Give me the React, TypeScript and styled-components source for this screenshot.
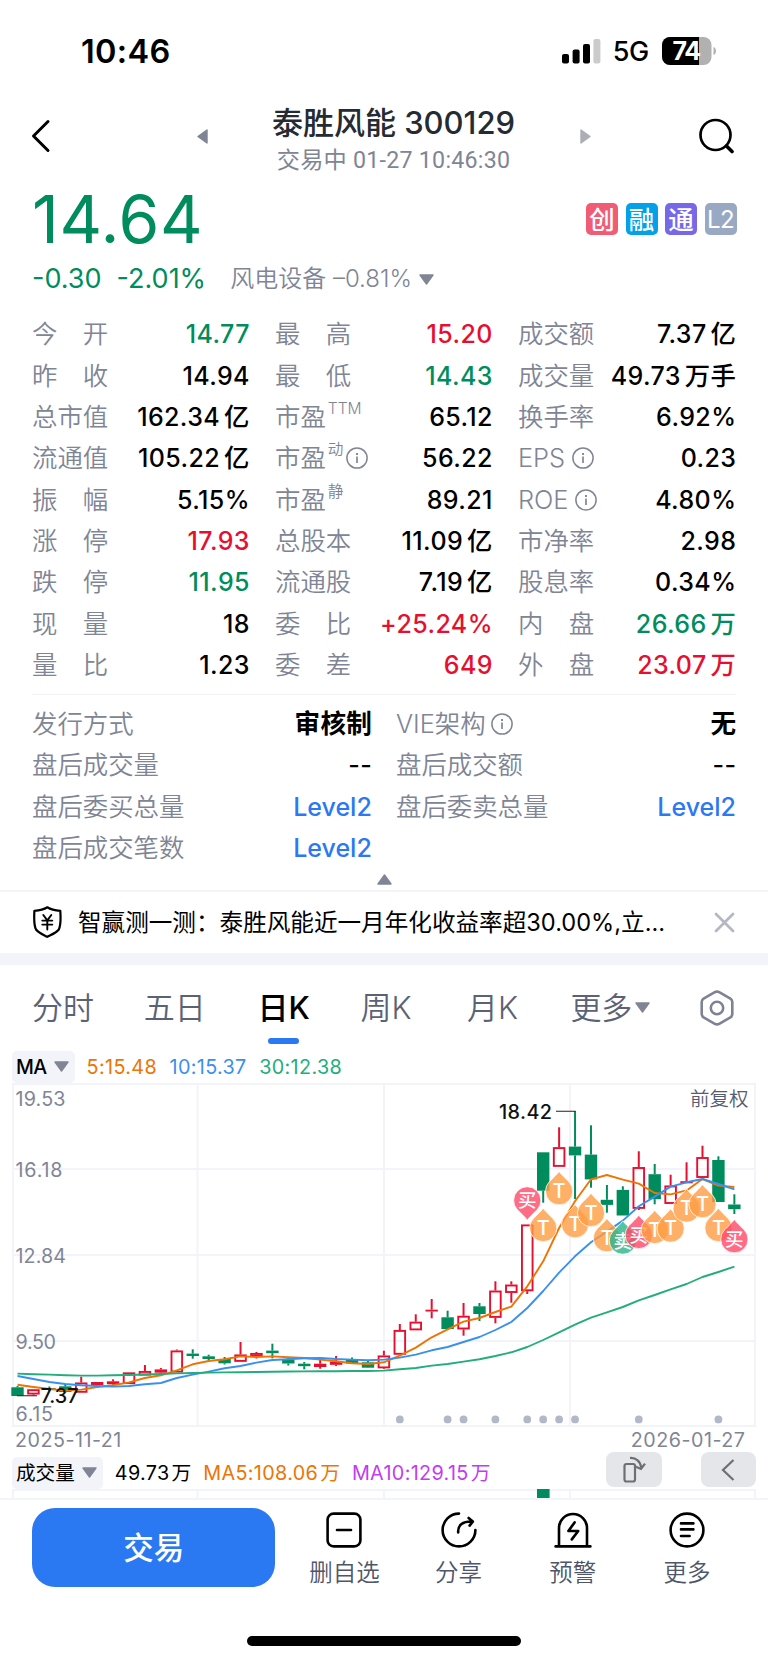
import React from 'react';
import styled, { createGlobalStyle } from 'styled-components';

const C = {
  text: '#000000',
  title: '#252b33',
  label: '#808596',
  tab: '#5b6276',
  red: '#e60f2f',
  green: '#008c5c',
  blue: '#2b78f3',
  grid: '#f3f4fa',
  ma5: '#ee7404',
  ma10: '#3a90ee',
  ma30: '#22ad7b',
  violet: '#c23cf2',
};

const GlobalStyle = createGlobalStyle`
  body { margin: 0; background: #fff; }
  * { box-sizing: border-box; }
`;

const Page = styled.div`
  width: 768px;
  height: 1663px;
  overflow: hidden;
  display: flex;
  flex-direction: column;
  background: #fff;
  color: ${C.text};
  font-family: Inter, 'Noto Sans CJK SC', sans-serif;
  white-space: nowrap;
`;

/* ---------- status bar ---------- */
const StatusBar = styled.div`
  height: 102px;
  padding: 0 51px 0 81px;
  display: flex;
  align-items: center;
  justify-content: space-between;
`;
const Clock = styled.span`
  font-size: 32.5px;
  font-weight: 600;
  letter-spacing: 0.3px;
`;
const StatusRight = styled.div`
  display: flex;
  align-items: center;
`;
const Network = styled.span`
  margin: 1px 13.5px 0 11.5px;
  font-size: 27px;
  font-weight: 500;
  letter-spacing: -0.6px;
`;

/* ---------- header ---------- */
const Header = styled.header`
  height: 78px;
  padding: 0 33px 0 31px;
  display: grid;
  grid-template-columns: 166px 76px 241px 77px 1fr;
`;
const HeaderIcon = styled.div`
  height: 68px;
  display: flex;
  align-items: center;
  justify-content: ${(p: { $end?: boolean }) => (p.$end ? 'flex-end' : 'flex-start')};
`;
const TitleBlock = styled.div`
  display: flex;
  flex-direction: column;
  align-items: center;
`;
const Title = styled.div`
  line-height: 41px;
  font-size: 31px;
  font-weight: 500;
  color: ${C.title};
`;
const Subtitle = styled.div`
  line-height: 34px;
  font-family: Roboto, 'Noto Sans CJK SC', sans-serif;
  font-size: 23.2px;
  color: ${C.label};
  letter-spacing: 0.25px;
`;

/* ---------- quote ---------- */
const PriceRow = styled.div`
  height: 78px;
  padding: 0 31.5px 0 32px;
  display: flex;
  align-items: center;
  justify-content: space-between;
`;
const Price = styled.div`
  font-size: 66px;
  line-height: 78px;
  font-weight: 400;
  letter-spacing: 0.6px;
  color: ${C.green};
`;
const Badges = styled.div`
  display: flex;
  gap: 7.5px;
`;
const Badge = styled.span`
  width: 32px;
  height: 32px;
  border-radius: 5px;
  display: flex;
  align-items: center;
  justify-content: center;
  padding-bottom: ${(p: { $bg: string; $latin?: boolean }) => (p.$latin ? 0 : 4)}px;
  background: ${p => p.$bg};
  color: #fff;
  font-size: ${p => (p.$latin ? 24 : 25.5)}px;
  font-weight: ${p => (p.$latin ? 400 : 500)};
  letter-spacing: ${p => (p.$latin ? -0.5 : 0)}px;
`;
const ChangeRow = styled.div`
  height: 42px;
  padding-left: 32px;
  display: flex;
  align-items: center;
`;
const Change = styled.span`
  margin-right: ${(p: { $gap: number }) => p.$gap}px;
  font-size: 27px;
  line-height: 42px;
  color: ${C.green};
`;
const Sector = styled.span`
  margin-right: 7px;
  font-size: 24px;
  line-height: 42px;
  font-weight: 350;
  color: ${C.label};
`;

/* ---------- figures ---------- */
const Figures = styled.div`
  padding: 13.6px 32px 0 32px;
  display: grid;
  grid-template-columns: 217.5px 217.5px 218px;
  column-gap: 25.5px;
  grid-auto-rows: 41.35px;
`;
const ExtraFigures = styled(Figures)`
  padding-top: 8px;
  grid-template-columns: 339.8px 340px;
  column-gap: 24.2px;
`;
const Figure = styled.div`
  display: flex;
  align-items: center;
  justify-content: space-between;
`;
const Label = styled.span`
  display: flex;
  align-items: center;
  font-size: 25.4px;
  line-height: 30px;
  font-weight: 350;
  color: ${C.label};
`;
const Sup = styled.span`
  margin: -16px 0 0 2px;
  font-size: 15.6px;
`;
const Value = styled.span`
  display: flex;
  align-items: center;
  gap: 4px;
  font-size: ${(p: { $color?: string; $strong?: boolean }) => (p.$strong ? 25.6 : 25)}px;
  line-height: 30px;
  font-weight: ${p => (p.$strong ? 600 : 500)};
  letter-spacing: ${p => (p.$strong ? 0.3 : 0.4)}px;
  margin-right: -0.4px;
  color: ${p => p.$color || C.text};
`;
const Link = styled(Value)`
  letter-spacing: 0;
  margin-right: 0;
`;
const Unit = styled.span`
  font-size: 25.4px;
`;
const Divider = styled.div`
  flex: none;
  height: 1px;
  margin: 8.5px 32px 0;
  background: #f1f2f6;
`;
const Collapse = styled.div`
  height: 21px;
  display: flex;
  justify-content: center;
  padding: 5px 0 0 0;
`;

/* ---------- notice ---------- */
const Notice = styled.div`
  height: 63px;
  border-top: 2px solid ${C.grid};
  padding: 0 33px;
  display: flex;
  align-items: center;
`;
const NoticeText = styled.span`
  flex: 1;
  margin: -3px 0 0 16px;
  font-size: 23.6px;
`;
const Band = styled.div`
  height: 12px;
  background: #f3f4f9;
`;

/* ---------- tabs ---------- */
const Tabs = styled.nav`
  height: 85px;
  padding-left: 32px;
  display: grid;
  justify-items: start;
  grid-template-columns: 111.8px 113.8px 102.9px 106.5px 103.4px 130px 34px;
`;
const Tab = styled.div`
  height: 85px;
  display: flex;
  flex-direction: column;
  align-items: center;
  font-size: 31px;
  line-height: 60px;
  font-weight: ${(p: { $active?: boolean }) => (p.$active ? 500 : 350)};
  color: ${p => (p.$active ? '#000' : C.tab)};
`;
const TabText = styled.span`
  height: 73px;
  display: flex;
  align-items: center;
  gap: 3px;
  padding-top: 13px;
`;
const Underline = styled.span`
  width: 31px;
  height: 6px;
  margin-top: 0.5px;
  border-radius: 3px;
  background: ${C.blue};
`;

/* ---------- chart ---------- */
const IndicatorRow = styled.div`
  height: ${(p: { $h: number }) => p.$h}px;
  padding: 0 12px;
  display: flex;
  align-items: flex-end;
  font-size: 19.6px;
  line-height: 32px;
`;
const Selector = styled.div`
  height: 32px;
  padding: 0 6px 0 4px;
  display: flex;
  align-items: center;
  gap: 7px;
  border-radius: 5px;
  background: ${C.grid};
  font-weight: ${(p: { $latin?: boolean }) => (p.$latin ? 500 : 400)};
  letter-spacing: ${p => (p.$latin ? -0.6 : 0)}px;
`;
const Reading = styled.span`
  height: 32px;
  margin-left: ${(p: { $ml: number; $color: string }) => p.$ml}px;
  display: flex;
  gap: 2px;
  font-size: 19.8px;
  letter-spacing: 0.35px;
  color: ${p => p.$color};
`;
const Dates = styled.div`
  height: 24px;
  padding: 0 22.5px 0 15px;
  display: flex;
  align-items: center;
  justify-content: space-between;
  font-size: 19.7px;
  letter-spacing: 0.5px;
  color: ${C.label};
`;
const ChartButtons = styled.div`
  align-self: flex-start;
  margin: 0.5px 0 0 auto;
  display: flex;
  gap: 39px;
`;
const ChartButton = styled.div`
  width: 55.5px;
  height: 35px;
  border-radius: 8px;
  background: #e5e6ea;
  display: flex;
  align-items: center;
  justify-content: center;
`;
const Plot = styled.svg`
  display: block;
  flex: none;
  font-family: Inter, 'Noto Sans CJK SC', sans-serif;
`;

/* ---------- bottom bar ---------- */
const BottomBar = styled.div`
  flex: 1;
  border-top: 2px solid ${C.grid};
  padding: 8px 24px 0 32px;
  display: flex;
  flex-direction: column;
`;
const Actions = styled.div`
  display: flex;
`;
const TradeButton = styled.div`
  width: 243.5px;
  height: 79px;
  margin-right: 12px;
  border-radius: 23px;
  background: ${C.blue};
  color: #fff;
  display: flex;
  align-items: center;
  justify-content: center;
  padding-bottom: 2px;
  font-size: 30.5px;
  font-weight: 500;
`;
const Action = styled.div`
  width: 114.2px;
  height: 84px;
  padding-top: 4px;
  display: flex;
  flex-direction: column;
  align-items: center;
  gap: 8px;
  font-size: 23.5px;
  line-height: 34px;
  font-weight: 350;
  color: #4f566b;
`;
const HomeIndicator = styled.div`
  width: 274px;
  height: 10px;
  margin: 44px 0 0 215px;
  border-radius: 5px;
  background: #000;
`;

/* ---------- small drawings ---------- */
const Triangle = ({ dir, w, h, color = '#808596' }: { dir: 'up' | 'down' | 'left' | 'right'; w: number; h: number; color?: string }) => {
  const d = {
    up: `M${w / 2} 1L${w - 1} ${h - 1}H1Z`,
    down: `M1 1H${w - 1}L${w / 2} ${h - 1}Z`,
    left: `M${w - 1} 1V${h - 1}L1 ${h / 2}Z`,
    right: `M1 1V${h - 1}L${w - 1} ${h / 2}Z`,
  }[dir];
  return (
    <svg width={w} height={h}>
      <path d={d} fill={color} stroke={color} strokeWidth="1.4" strokeLinejoin="round" />
    </svg>
  );
};

const InfoIcon = styled(({ className }: { className?: string; $ml: number }) => (
  <svg className={className} width="22" height="22" viewBox="0 0 22 22" fill="none" stroke={C.label} strokeWidth="1.5">
    <circle cx="11" cy="11" r="10.1" />
    <path d="M11 9.6V16" strokeWidth="1.7" />
    <path d="M11 6V8" strokeWidth="1.9" />
  </svg>
))`
  margin-left: ${p => p.$ml}px;
`;

/* ---------- data ---------- */
type Fig = { l: string; sup?: string; info?: number; v: string; u?: string; c?: string; strong?: boolean; link?: boolean };
const figures: Fig[] = [
  { l: '今　开', v: '14.77', c: C.green }, { l: '最　高', v: '15.20', c: C.red }, { l: '成交额', v: '7.37', u: '亿' },
  { l: '昨　收', v: '14.94' }, { l: '最　低', v: '14.43', c: C.green }, { l: '成交量', v: '49.73', u: '万手' },
  { l: '总市值', v: '162.34', u: '亿' }, { l: '市盈', sup: 'TTM', v: '65.12' }, { l: '换手率', v: '6.92%' },
  { l: '流通值', v: '105.22', u: '亿' }, { l: '市盈', sup: '动', info: 3, v: '56.22' }, { l: 'EPS', info: 6.5, v: '0.23' },
  { l: '振　幅', v: '5.15%' }, { l: '市盈', sup: '静', v: '89.21' }, { l: 'ROE', info: 6.5, v: '4.80%' },
  { l: '涨　停', v: '17.93', c: C.red }, { l: '总股本', v: '11.09', u: '亿' }, { l: '市净率', v: '2.98' },
  { l: '跌　停', v: '11.95', c: C.green }, { l: '流通股', v: '7.19', u: '亿' }, { l: '股息率', v: '0.34%' },
  { l: '现　量', v: '18' }, { l: '委　比', v: '+25.24%', c: C.red }, { l: '内　盘', v: '26.66', u: '万', c: C.green },
  { l: '量　比', v: '1.23' }, { l: '委　差', v: '649', c: C.red }, { l: '外　盘', v: '23.07', u: '万', c: C.red },
];
const extras: Fig[] = [
  { l: '发行方式', v: '审核制', strong: true }, { l: 'VIE架构', info: 5.5, v: '无', strong: true },
  { l: '盘后成交量', v: '--' }, { l: '盘后成交额', v: '--' },
  { l: '盘后委买总量', v: 'Level2', link: true }, { l: '盘后委卖总量', v: 'Level2', link: true },
  { l: '盘后成交笔数', v: 'Level2', link: true },
];

const FigureCell = ({ f }: { f: Fig }) => (
  <Figure>
    <Label>
      {f.l}
      {f.sup && <Sup>{f.sup}</Sup>}
      {f.info !== undefined && <InfoIcon $ml={f.info} />}
    </Label>
    {f.link ? (
      <Link $color={C.blue}>{f.v}</Link>
    ) : (
      <Value $color={f.c} $strong={f.strong}>
        {f.v}
        {f.u && <Unit>{f.u}</Unit>}
      </Value>
    )}
  </Figure>
);

/* Candle: [kind, high, bodyTop, bodyBottom, low] — r rising, f falling */
type Candle = ['r' | 'f', number, number, number, number];
const candles: Candle[] = [
  ['f', 1386, 1387.3, 1396, 1396], ['r', 1389, 1389.3, 1394.5, 1395.5], ['f', 1386.5, 1388, 1390, 1391], ['f', 1384, 1386.3, 1392, 1393],
  ['r', 1376.7, 1382.5, 1392.7, 1392.7], ['r', 1382, 1382, 1385, 1385], ['r', 1379.3, 1381.3, 1384.2, 1385], ['r', 1372.4, 1372.4, 1384, 1384],
  ['r', 1365, 1371, 1375.5, 1375.5], ['r', 1368, 1369.4, 1372.7, 1374], ['r', 1349.5, 1350.5, 1372.5, 1372.5], ['f', 1349.3, 1353.6, 1356, 1358.7],
  ['f', 1354.7, 1356.3, 1359, 1361], ['f', 1357, 1359, 1363.3, 1364.5], ['r', 1342, 1354.5, 1361.8, 1361.8], ['r', 1352, 1353, 1356.8, 1358.5],
  ['f', 1343.7, 1350.6, 1353.2, 1358.3], ['f', 1358, 1360, 1363.5, 1365.5], ['f', 1362, 1363.7, 1366.2, 1369.3], ['r', 1360, 1363.7, 1367, 1368.7],
  ['r', 1356, 1361.5, 1364.8, 1366], ['f', 1357.5, 1360, 1363.5, 1364], ['f', 1361, 1362.3, 1367.7, 1368], ['r', 1350.7, 1355.5, 1368.3, 1369],
  ['r', 1324, 1330, 1354.7, 1354.7], ['r', 1314.3, 1321.7, 1330.3, 1330.3], ['r', 1299, 1309.7, 1311.5, 1318.3], ['f', 1310.7, 1317.3, 1329, 1329],
  ['r', 1303, 1315.8, 1329.4, 1335.7], ['f', 1303, 1306.3, 1314, 1321], ['r', 1281.3, 1290.6, 1317.8, 1323.3], ['r', 1281.3, 1284.6, 1292.9, 1302.7],
  ['r', 1224.5, 1224.5, 1291.2, 1294], ['f', 1152.3, 1152.3, 1190.7, 1202.7], ['r', 1127.3, 1147.2, 1166.8, 1166.8], ['f', 1111, 1146.6, 1155.4, 1199],
  ['f', 1125.3, 1154.6, 1179.4, 1187.7], ['f', 1185, 1199.8, 1204.9, 1212.7], ['f', 1186.3, 1189.9, 1215.5, 1215.5], ['r', 1151.3, 1167.1, 1208.8, 1210],
  ['f', 1164, 1174.2, 1199.2, 1204.3], ['r', 1174.7, 1185.5, 1203.9, 1203.9], ['r', 1162.3, 1181.2, 1183.3, 1183.3], ['r', 1145.7, 1157.1, 1177.9, 1177.9],
  ['f', 1156.3, 1160, 1202, 1202], ['f', 1194.3, 1204.5, 1209.2, 1214],
];
const ma5 = [1384.8, 1387, 1389, 1390.6, 1389.6, 1387, 1385.3, 1382.4, 1378, 1375.3, 1370.3, 1364.3, 1361, 1359.3, 1356.4, 1357, 1356.4, 1357.3, 1358, 1359.6, 1361.3, 1363.3, 1364, 1362.3, 1355.6, 1347.6, 1337.3, 1329.3, 1321.6, 1318, 1312, 1306.6, 1286.3, 1261.3, 1228, 1201.3, 1179.3, 1175, 1179.6, 1183.6, 1193, 1194.4, 1190.4, 1179, 1185.6, 1187];
const ma10 = [1376, 1379, 1382, 1384, 1385.3, 1386, 1386.6, 1386, 1384.3, 1383, 1378, 1374.6, 1371.6, 1368.3, 1366, 1362.6, 1360, 1359.3, 1358.3, 1358, 1359, 1359.6, 1360.3, 1359.6, 1357.6, 1354.6, 1350.3, 1347, 1342, 1337, 1330, 1322, 1308, 1291, 1272.6, 1256.3, 1242.3, 1231.6, 1220.6, 1206.3, 1196.6, 1186.6, 1182.3, 1179, 1184, 1189.4];
const ma30 = [1373.6, 1374.2, 1374.6, 1375.2, 1375.6, 1375.6, 1375.3, 1375, 1374.5, 1374, 1373.4, 1373, 1372.6, 1372.4, 1372.2, 1372, 1371.7, 1371.5, 1371.4, 1371.3, 1371.2, 1371, 1371, 1370.6, 1369.3, 1368, 1365.6, 1364, 1361.6, 1359.3, 1356, 1352.3, 1347, 1340, 1332.3, 1324.6, 1317.6, 1312.3, 1307, 1300.3, 1295, 1289.3, 1284, 1277, 1272, 1266.6];
const dots = [24, 27, 28, 30, 32, 33, 34, 35, 39, 44];

type Pin = { i: number; y: number; k: 'T' | '买' | '卖'; down?: boolean };
const pins: Pin[] = [
  { i: 32, y: 1200.2, k: '买', down: true }, { i: 33, y: 1228.2, k: 'T' }, { i: 34, y: 1191.4, k: 'T' }, { i: 35, y: 1224.4, k: 'T' },
  { i: 36, y: 1213.2, k: 'T' }, { i: 37, y: 1238.4, k: 'T' }, { i: 38, y: 1240.8, k: '卖' }, { i: 39, y: 1235.2, k: '买' },
  { i: 40, y: 1230.2, k: 'T' }, { i: 41, y: 1228.8, k: 'T' }, { i: 42, y: 1208.8, k: 'T' }, { i: 43, y: 1204.4, k: 'T' },
  { i: 44, y: 1228.2, k: 'T' }, { i: 45, y: 1239.4, k: '买' },
];
const pinColor = { T: '#ff9c42', 买: '#ff4766', 卖: '#2ab388' };

const cx = (i: number) => 17.5 + i * 15.93;
const line = (ys: number[]) => ys.map((y, i) => `${cx(i).toFixed(1)},${y}`).join(' ');

const CandleMark = ({ c, i }: { c: Candle; i: number }) => {
  const [kind, high, top, bottom, low] = c;
  const x = cx(i);
  const rising = kind === 'r';
  const color = rising ? C.red : C.green;
  const thin = bottom - top < 3.6;
  return (
    <g stroke={color} strokeWidth="2">
      {high < top && <path d={`M${x} ${high}V${top}`} />}
      {low > bottom && <path d={`M${x} ${bottom}V${low}`} />}
      {rising && !thin ? (
        <rect x={x - 5.3} y={top + 0.9} width="10.6" height={bottom - top - 1.8} fill="none" strokeWidth="1.9" />
      ) : (
        <rect x={x - 6.2} y={top} width="12.4" height={bottom - top} fill={color} stroke="none" />
      )}
    </g>
  );
};

const PinMark = ({ p }: { p: Pin }) => (
  <g transform={`translate(${cx(p.i)} ${p.y})`}>
    <path
      d="M0 -20C2 -17 6 -13.5 9.8 -9.6A13.6 13.6 0 1 1 -9.8 -9.6C-6 -13.5 -2 -17 0 -20Z"
      transform={p.down ? 'rotate(180)' : undefined}
      fill={pinColor[p.k]}
      fillOpacity="0.8"
      stroke="#fff"
      strokeWidth="0.8"
    />
    <text y={p.k === 'T' ? 6.4 : 6.8} textAnchor="middle" fill="#fff" fontSize={p.k === 'T' ? 20 : 18.5} fontWeight="500">
      {p.k}
    </text>
  </g>
);

const gridX = [13, 197.5, 384, 570, 755];
const axis: [string, number, number][] = [['19.53', 1106, 50], ['16.18', 1176.6, 47], ['12.84', 1262.6, 50.5], ['9.50', 1348.7, 40.5], ['6.15', 1421, 37.5]];

const KChart = () => (
  <Plot width="768" height="345" viewBox="0 1083 768 345">
    <g stroke={C.grid} strokeWidth="2">
      {gridX.map(x => <path key={x} d={`M${x} 1083V1426.5`} />)}
      {[1084, 1169, 1255, 1341, 1426].map(y => <path key={y} d={`M12 ${y}H756`} />)}
    </g>
    <g fill={C.label} fontSize="19.7">
      {axis.map(([t, y, w]) => <text key={t} x="15.5" y={y} textLength={w}>{t}</text>)}
    </g>
    <text x="748.5" y="1105.6" textAnchor="end" fontSize="19.5" fontWeight="350" fill="#565d72">前复权</text>
    {dots.map(i => <circle key={i} cx={cx(i)} cy="1419.4" r="3.9" fill="#b2b8c8" />)}
    {candles.map((c, i) => <CandleMark key={i} c={c} i={i} />)}
    <g fill="none" strokeWidth="1.9" strokeLinejoin="round">
      <polyline points={line(ma5)} stroke={C.ma5} />
      <polyline points={line(ma10)} stroke={C.ma10} />
      <polyline points={line(ma30)} stroke={C.ma30} />
    </g>
    <path d="M556 1111.3H575.5M17 1395.8H37" stroke="#222" strokeWidth="1.1" />
    <g fill="#111" fontSize="19.8" fontWeight="500">
      <text x="499" y="1118.6" textLength="53">18.42</text>
      <text x="40.5" y="1403.4" textLength="38">7.37</text>
    </g>
    {pins.map(p => <PinMark key={p.i} p={p} />)}
  </Plot>
);

const App = () => (
  <Page>
    <GlobalStyle />
    <StatusBar>
      <Clock>10:46</Clock>
      <StatusRight>
        <svg width="39" height="26" viewBox="0 0 39 26">
          <rect x="0" y="16" width="7" height="9.4" rx="2" />
          <rect x="10.6" y="11.4" width="7" height="14" rx="2" />
          <rect x="21" y="6" width="7" height="19.4" rx="2" />
          <rect x="31.4" y="1" width="7" height="24.4" rx="2" fill="#cbcbcb" />
        </svg>
        <Network>5G</Network>
        <svg width="55" height="28" viewBox="0 0 55 28">
          <clipPath id="cell"><rect width="49.5" height="28" rx="8" /></clipPath>
          <g clipPath="url(#cell)">
            <rect width="50" height="28" fill="#b1b1b1" />
            <rect width="37" height="28" />
          </g>
          <path d="M51.5 10C54.8 11 54.8 17 51.5 18Z" fill="#b1b1b1" />
          <text x="24.2" y="23" textAnchor="middle" fontFamily="Inter" fontSize="25" fontWeight="700" letterSpacing="-1.2" fill="#fff">74</text>
        </svg>
      </StatusRight>
    </StatusBar>

    <Header>
      <HeaderIcon>
        <svg width="20" height="34" viewBox="0 0 20 34" fill="none" stroke="#000" strokeWidth="3" strokeLinecap="round" strokeLinejoin="round">
          <path d="M17 2.5L2.5 17L17 31.5" />
        </svg>
      </HeaderIcon>
      <HeaderIcon><Triangle dir="left" w={11} h={15} /></HeaderIcon>
      <TitleBlock>
        <Title>泰胜风能 300129</Title>
        <Subtitle>交易中 01-27 10:46:30</Subtitle>
      </TitleBlock>
      <HeaderIcon $end><Triangle dir="right" w={11} h={15} color="#acaeb3" /></HeaderIcon>
      <HeaderIcon $end>
        <svg width="36" height="36" viewBox="0 0 36 36" fill="none" stroke="#000" strokeWidth="2.7" strokeLinecap="round">
          <circle cx="16.5" cy="17" r="15" />
          <path d="M27.5 28L33 33.5" strokeWidth="3.6" />
        </svg>
      </HeaderIcon>
    </Header>

    <PriceRow>
      <Price>14.64</Price>
      <Badges>
        <Badge $bg="#f25b74">创</Badge>
        <Badge $bg="#04a1e9">融</Badge>
        <Badge $bg="#7668e8">通</Badge>
        <Badge $bg="#99a9c4" $latin>L2</Badge>
      </Badges>
    </PriceRow>
    <ChangeRow>
      <Change $gap={15}>-0.30</Change>
      <Change $gap={24}>-2.01%</Change>
      <Sector>风电设备 –0.81%</Sector>
      <Triangle dir="down" w={15} h={11} />
    </ChangeRow>

    <Figures>{figures.map(f => <FigureCell key={f.l + (f.sup || '')} f={f} />)}</Figures>
    <Divider />
    <ExtraFigures>{extras.map(f => <FigureCell key={f.l} f={f} />)}</ExtraFigures>
    <Collapse><Triangle dir="up" w={15} h={11} /></Collapse>

    <Notice>
      <svg width="29" height="32" viewBox="0 0 29 32" fill="none" stroke="#000" strokeLinejoin="round" strokeLinecap="round">
        <path d="M14.3 1.3C11 3.4 6 4.5 1.4 4.8C1 12 .6 19 3 23.5C5.4 26.8 10 28.6 14.3 30.8C18.6 28.6 23.4 26.8 25.8 23.5C28 19 27.8 12 27.3 4.8C22.6 4.5 17.6 3.4 14.3 1.3Z" strokeWidth="2.2" />
        <path d="M10.3 9L14.3 14.4L18.3 9M9.3 14.6H19.3M9.3 18.6H19.3M14.3 14.4V23.5" strokeWidth="1.9" />
      </svg>
      <NoticeText>智赢测一测：泰胜风能近一月年化收益率超30.00%,立...</NoticeText>
      <svg width="21" height="21" viewBox="0 0 21 21" stroke="#b4b8c4" strokeWidth="2.8" strokeLinecap="round">
        <path d="M2 2L19 19M19 2L2 19" />
      </svg>
    </Notice>
    <Band />

    <Tabs>
      <Tab><TabText>分时</TabText></Tab>
      <Tab><TabText>五日</TabText></Tab>
      <Tab $active><TabText>日K</TabText><Underline /></Tab>
      <Tab><TabText>周K</TabText></Tab>
      <Tab><TabText>月K</TabText></Tab>
      <Tab><TabText>更多<Triangle dir="down" w={15} h={11} /></TabText></Tab>
      <Tab>
        <TabText>
          <svg width="34" height="36" viewBox="0 0 34 36" fill="none" stroke="#7d8393" strokeWidth="2.6" strokeLinejoin="round">
            <path d="M14.8 2.2Q17 1 19.2 2.2L30.4 8.6Q32.3 9.8 32.3 12V24Q32.3 26.2 30.4 27.4L19.2 33.8Q17 35 14.8 33.8L3.6 27.4Q1.7 26.2 1.7 24V12Q1.7 9.8 3.6 8.6Z" />
            <circle cx="17" cy="18" r="6.2" />
          </svg>
        </TabText>
      </Tab>
    </Tabs>

    <IndicatorRow $h={33}>
      <Selector $latin>MA<Triangle dir="down" w={15} h={11} /></Selector>
      <Reading $ml={12} $color={C.ma5}>5:15.48</Reading>
      <Reading $ml={12.5} $color={C.ma10}>10:15.37</Reading>
      <Reading $ml={12.5} $color={C.ma30}>30:12.38</Reading>
    </IndicatorRow>
    <KChart />
    <Dates><span>2025-11-21</span><span>2026-01-27</span></Dates>
    <IndicatorRow $h={37}>
      <Selector>成交量<Triangle dir="down" w={15} h={11} /></Selector>
      <Reading $ml={12} $color={C.text}>49.73<span>万</span></Reading>
      <Reading $ml={11.5} $color={C.ma5}>MA5:108.06<span>万</span></Reading>
      <Reading $ml={11.5} $color={C.violet}>MA10:129.15<span>万</span></Reading>
      <ChartButtons>
        <ChartButton>
          <svg width="24" height="28" viewBox="0 0 24 28" fill="none" stroke="#6e6f73" strokeWidth="2.2">
            <rect x="2.5" y="8" width="10.5" height="17.5" rx="2" />
            <path d="M8 2C14 1.5 18.5 5.5 19.2 11.5M13.2 10.5L19 13L23 7.6" />
          </svg>
        </ChartButton>
        <ChartButton>
          <svg width="14" height="22" viewBox="0 0 14 22" fill="none" stroke="#6e6f73" strokeWidth="2.2">
            <path d="M12.5 1L2 11L12.5 21" />
          </svg>
        </ChartButton>
      </ChartButtons>
    </IndicatorRow>
    <Plot width="768" height="9" viewBox="0 1489 768 9">
      <g stroke={C.grid} strokeWidth="2">
        <path d="M12 1490H756" />
        {gridX.map(x => <path key={x} d={`M${x} 1489V1498`} />)}
      </g>
      <rect x="537" y="1489" width="12.6" height="9" fill={C.green} />
    </Plot>

    <BottomBar>
      <Actions>
        <TradeButton>交易</TradeButton>
        <Action>
          <svg width="36" height="36" viewBox="0 0 36 36" fill="none" stroke="#000" strokeWidth="2.6" strokeLinecap="round">
            <rect x="1.6" y="1.6" width="32.8" height="32.8" rx="6" />
            <path d="M11 18H25" />
          </svg>
          删自选
        </Action>
        <Action>
          <svg width="36" height="36" viewBox="0 0 36 36" fill="none" stroke="#000" strokeWidth="2.6" strokeLinecap="round" strokeLinejoin="round">
            <path d="M18 1.6A16.4 16.4 0 1 0 34.4 18" />
            <path d="M17.2 20.5C16.6 13 22 9.2 31 9.6M27.6 6L31.8 9.6L28.6 13.6" />
          </svg>
          分享
        </Action>
        <Action>
          <svg width="38" height="36" viewBox="0 0 38 36" fill="none" stroke="#000" strokeWidth="2.6" strokeLinecap="round" strokeLinejoin="round">
            <path d="M1.6 34.4H36.4M5 34V16A14 14 0 0 1 33 16V34" />
            <path d="M20.6 10.4L14.4 19H24.2L17.8 27.4" />
          </svg>
          预警
        </Action>
        <Action>
          <svg width="36" height="36" viewBox="0 0 36 36" fill="none" stroke="#000" strokeWidth="2.6" strokeLinecap="round">
            <circle cx="18" cy="18" r="16.4" />
            <path d="M12 11.4H24.4M12 17.4H24.4M12 24H20.6" />
          </svg>
          更多
        </Action>
      </Actions>
      <HomeIndicator />
    </BottomBar>
  </Page>
);

export default App;
